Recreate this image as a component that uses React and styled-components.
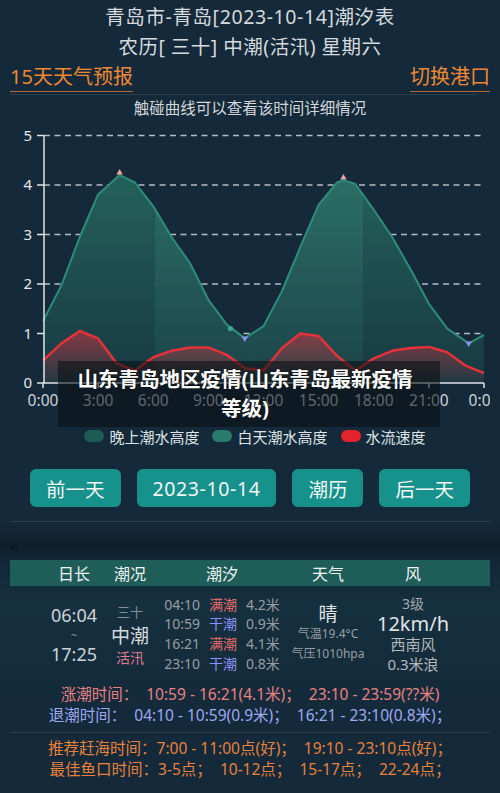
import React from 'react'
import styled, { createGlobalStyle } from 'styled-components'

const GlobalStyle = createGlobalStyle`
  html, body {
    margin: 0;
    padding: 0;
    background: #142a3a;
  }
  body {
    font-family: "Noto Sans", "Noto Sans CJK SC", sans-serif;
  }
`

const Page = styled.div`
  width: 500px;
  min-height: 793px;
  background: #142a3a;
  color: #d6dadd;
  overflow: hidden;
`

const Title = styled.div`
  padding-top: 2px;
  text-align: center;
  font-size: 19.5px;
  line-height: 30px;
  letter-spacing: 0.6px;
  color: #d6dadd;
`

const SubTitle = styled.div`
  text-align: center;
  font-size: 19.5px;
  line-height: 30px;
  letter-spacing: 0.5px;
  color: #d6dadd;
`

const NavRow = styled.div`
  display: flex;
  justify-content: space-between;
  padding: 0 10px;
  margin-top: 1px;
`

const NavLink = styled.span`
  font-size: 20px;
  line-height: 28px;
  color: #ee8834;
  border-bottom: 1.5px solid #b8662a;
`

const Divider = styled.div`
  height: 1px;
  margin: ${p => p.$margin || '0 10px'};
  background: rgba(160, 190, 200, 0.16);
`

const Hint = styled.div`
  text-align: center;
  font-size: 15.5px;
  line-height: 24px;
  color: #d2d6d9;
`

const ChartWrap = styled.div`
  position: relative;
  height: 298px;
`

const ChartSvg = styled.svg`
  display: block;
  overflow: hidden;
  font-family: "Noto Sans", sans-serif;
`

const NewsOverlay = styled.div`
  position: absolute;
  left: 58px;
  top: 241px;
  width: 382px;
  height: 66px;
  box-sizing: border-box;
  padding: 4px 18px 0 10px;
  background: rgba(8, 12, 16, 0.55);
  text-align: center;
  font-size: 20.5px;
  font-weight: 700;
  line-height: 29px;
  color: #ffffff;
  text-shadow: 0 0 2px rgba(0, 0, 0, 0.7);
`

const Legend = styled.div`
  display: flex;
  justify-content: center;
  align-items: center;
  gap: 13px;
  height: 36px;
  padding-left: 10px;
  font-size: 15px;
  color: #dfe3e6;
`

const LegendItem = styled.div`
  display: flex;
  align-items: center;
  gap: 5px;
`

const Swatch = styled.span`
  width: 20px;
  height: 12px;
  border-radius: 6px;
  background: ${p => p.$color};
`

const ButtonRow = styled.div`
  display: flex;
  justify-content: center;
  gap: 16px;
  margin-top: 15px;
`

const DayButton = styled.button`
  height: 38px;
  padding: 0 16px;
  border: none;
  border-radius: 6px;
  background: #17918c;
  color: #f2f6f6;
  font-family: inherit;
  font-size: 19.5px;
  letter-spacing: ${p => (p.$wide ? '0.6px' : '0')};
`

const TableSection = styled.div`
  margin-top: 2px;
  padding-top: 14px;
  background: linear-gradient(
    to bottom,
    #132736 0px,
    #0f202d 22px,
    #12283a 40px,
    #15303f 80px,
    #142b3b 160px,
    #142a3a 200px
  );
`

const Arrow = styled.div`
  padding-left: 10px;
  font-size: 14px;
  line-height: 20px;
  color: #0b0f12;
`

const TableHead = styled.div`
  display: grid;
  grid-template-columns: 56px 56px 128px 84px 86px;
  align-items: center;
  height: 26px;
  margin: 2px 10px 0;
  padding-left: 36px;
  background: #1f5d58;
  font-size: 16px;
  color: #f0f4f4;
  text-align: center;
`

const TableBody = styled.div`
  display: grid;
  grid-template-columns: 56px 56px 128px 84px 86px;
  align-items: center;
  height: 96px;
  margin: 0 10px;
  padding-left: 36px;
  text-align: center;
`

const Cell = styled.div`
  display: flex;
  flex-direction: column;
  align-items: center;
`

const Line = styled.span`
  display: block;
  white-space: nowrap;
  font-size: ${p => p.$size || 14}px;
  line-height: ${p => p.$lh || 20}px;
  color: ${p => p.$color || '#9c9fa2'};
`

const TideRow = styled.div`
  display: flex;
  justify-content: center;
  gap: 9px;
  font-size: 14px;
  line-height: 19.7px;
  color: #9a9da0;
`

const TideKind = styled.span`
  color: ${p => (p.$high ? '#e26a6a' : '#8f90f6')};
`

const InfoBlock = styled.div`
  margin-top: ${p => p.$top || 0}px;
  text-align: center;
  font-size: 15.5px;
  line-height: 21px;
  white-space: pre;
`

const InfoLine = styled.div`
  color: ${p => p.$color};
`

const NextHead = styled.div`
  height: 12px;
  margin: 25px 10px 0;
  background: #1f5d58;
`

// ---- chart data ----
const HOUR = 18.375
const hx = h => 43 + h * HOUR
const vy = v => 263 - v * 49.5

const tide = [
  [0, 1.25], [1, 1.97], [2, 2.95], [3, 3.81], [4.17, 4.2], [5, 4.05],
  [6, 3.57], [7, 2.95], [8, 2.42], [9, 1.68], [10, 1.18], [10.98, 0.9],
  [12, 1.15], [13, 1.85], [14, 2.75], [15, 3.6], [16, 4.05], [16.35, 4.1],
  [17, 4.02], [18, 3.5], [19, 2.95], [20, 2.3], [21, 1.6], [22, 1.1],
  [23.17, 0.8], [24, 0.97]
]

const current = [
  0.45, 0.8, 1.05, 0.9, 0.4, 0.25, 0.52, 0.65, 0.72, 0.72, 0.57, 0.3, 0.25,
  0.7, 1.0, 0.95, 0.55, 0.25, 0.5, 0.65, 0.71, 0.73, 0.62, 0.35, 0.2
].map((v, i) => [i, v])

const linePath = pts =>
  pts.map(([h, v], i) => `${i ? 'L' : 'M'}${hx(h).toFixed(1)} ${vy(v).toFixed(1)}`).join(' ')

const areaPath = pts =>
  `${linePath(pts)} L${hx(24)} ${vy(0)} L${hx(0)} ${vy(0)} Z`

const sunrise = hx(6 + 4 / 60)
const sunset = hx(17 + 25 / 60)

const TideChart = () => (
  <ChartSvg width="490" height="298" viewBox="0 0 490 298">
    <defs>
      <linearGradient id="nightFill" x1="0" y1="50" x2="0" y2="263" gradientUnits="userSpaceOnUse">
        <stop offset="0" stopColor="#24625b" />
        <stop offset="1" stopColor="#173943" />
      </linearGradient>
      <linearGradient id="dayFill" x1="0" y1="50" x2="0" y2="263" gradientUnits="userSpaceOnUse">
        <stop offset="0" stopColor="#2c7067" />
        <stop offset="1" stopColor="#1b4349" />
      </linearGradient>
      <linearGradient id="redFill" x1="0" y1="208" x2="0" y2="263" gradientUnits="userSpaceOnUse">
        <stop offset="0" stopColor="#d8303c" stopOpacity="0.6" />
        <stop offset="1" stopColor="#d8303c" stopOpacity="0.05" />
      </linearGradient>
      <clipPath id="nightClip">
        <rect x="0" y="0" width={sunrise} height="298" />
        <rect x={sunset} y="0" width={500 - sunset} height="298" />
      </clipPath>
      <clipPath id="dayClip">
        <rect x={sunrise} y="0" width={sunset - sunrise} height="298" />
      </clipPath>
    </defs>

    {[1, 2, 3, 4, 5].map(v => (
      <line
        key={v}
        x1="44" x2="484" y1={vy(v)} y2={vy(v)}
        stroke="#b4bcc2" strokeWidth="1.3" strokeDasharray="6 4.5"
      />
    ))}

    <path d={areaPath(tide)} fill="url(#nightFill)" clipPath="url(#nightClip)" />
    <path d={areaPath(tide)} fill="url(#dayFill)" clipPath="url(#dayClip)" />
    <path d={linePath(tide)} fill="none" stroke="#2f8c7b" strokeWidth="2" strokeLinejoin="round" />

    <path d={areaPath(current)} fill="url(#redFill)" />
    <path d={linePath(current)} fill="none" stroke="#e3323a" strokeWidth="2.5" strokeLinejoin="round" />

    {/* high / low markers */}
    <path d={`M${hx(4.17)} ${vy(4.2) - 6} l3.2 5.5 h-6.4 Z`} fill="#f0a3a3" />
    <path d={`M${hx(16.35)} ${vy(4.1) - 6} l3.2 5.5 h-6.4 Z`} fill="#f0a3a3" />
    <path d={`M${hx(10.98) - 3.2} ${vy(0.9) - 2} h6.4 l-3.2 5.5 Z`} fill="#8f90f0" />
    <path d={`M${hx(23.17) - 3.2} ${vy(0.8) - 2} h6.4 l-3.2 5.5 Z`} fill="#8f90f0" />
    <circle cx={hx(10.2)} cy={vy(1.1)} r="2.6" fill="#3ea593" />

    <line x1="44" x2="44" y1={vy(5)} y2={vy(0)} stroke="#dfe3e6" strokeWidth="1.5" />
    <line x1="43" x2="484" y1={vy(0)} y2={vy(0)} stroke="#dfe3e6" strokeWidth="1.5" />

    {[0, 1, 2, 3, 4, 5].map(v => (
      <g key={v}>
        <line x1="37" x2="44" y1={vy(v)} y2={vy(v)} stroke="#dfe3e6" strokeWidth="1.5" />
        <text x="32" y={vy(v) + 5} textAnchor="end" fontSize="15" fill="#e4e7ea">{v}</text>
      </g>
    ))}

    {[0, 3, 6, 9, 12, 15, 18, 21, 24].map(h => (
      <g key={h}>
        <line x1={hx(h)} x2={hx(h)} y1={vy(0)} y2={vy(0) + 5} stroke="#dfe3e6" strokeWidth="1.5" />
        <text x={hx(h)} y="286" textAnchor="middle" fontSize="15.5" fill="#cfd3d6">
          {`${h % 24}:00`}
        </text>
      </g>
    ))}
  </ChartSvg>
)

const tideRows = [
  { time: '04:10', kind: '满潮', high: true, height: '4.2米' },
  { time: '10:59', kind: '干潮', high: false, height: '0.9米' },
  { time: '16:21', kind: '满潮', high: true, height: '4.1米' },
  { time: '23:10', kind: '干潮', high: false, height: '0.8米' }
]

const App = () => (
  <Page>
    <GlobalStyle />
    <Title>青岛市-青岛[2023-10-14]潮汐表</Title>
    <SubTitle>农历[ 三十] 中潮(活汛) 星期六</SubTitle>
    <NavRow>
      <NavLink>15天天气预报</NavLink>
      <NavLink>切换港口</NavLink>
    </NavRow>
    <Divider $margin="2px 22px 1px 10px" />
    <Hint>触碰曲线可以查看该时间详细情况</Hint>

    <ChartWrap>
      <TideChart />
      <NewsOverlay>
        山东青岛地区疫情(山东青岛最新疫情
        <br />
        等级)
      </NewsOverlay>
    </ChartWrap>

    <Legend>
      <LegendItem>
        <Swatch $color="#1f5b55" />
        晚上潮水高度
      </LegendItem>
      <LegendItem>
        <Swatch $color="#2b7b6d" />
        白天潮水高度
      </LegendItem>
      <LegendItem>
        <Swatch $color="#e3242a" />
        水流速度
      </LegendItem>
    </Legend>

    <ButtonRow>
      <DayButton>前一天</DayButton>
      <DayButton $wide>2023-10-14</DayButton>
      <DayButton>潮历</DayButton>
      <DayButton>后一天</DayButton>
    </ButtonRow>
    <Divider $margin="14px 10px 0" />

    <TableSection>
      <Arrow>&lt;</Arrow>
      <TableHead>
        <span>日长</span>
        <span>潮况</span>
        <span>潮汐</span>
        <span>天气</span>
        <span>风</span>
      </TableHead>
      <TableBody>
        <Cell>
          <Line $size={18} $color="#d0d3d6">06:04</Line>
          <Line $size={11} $lh={19} $color="#8d9194">~</Line>
          <Line $size={18} $color="#d0d3d6">17:25</Line>
        </Cell>
        <Cell>
          <Line $size={13} $color="#8a8e91">三十</Line>
          <Line $size={19} $lh={28} $color="#d8dbde">中潮</Line>
          <Line $size={14} $lh={16} $color="#e07b92">活汛</Line>
        </Cell>
        <Cell>
          {tideRows.map(r => (
            <TideRow key={r.time}>
              <span>{r.time}</span>
              <TideKind $high={r.high}>{r.kind}</TideKind>
              <span>{r.height}</span>
            </TideRow>
          ))}
        </Cell>
        <Cell>
          <Line $size={19} $color="#e0e3e6">晴</Line>
          <Line $size={12} $color="#9a9ea1">气温19.4°C</Line>
          <Line $size={12} $color="#9a9ea1">气压1010hpa</Line>
        </Cell>
        <Cell>
          <Line $size={14} $color="#a4a8ab">3级</Line>
          <Line $size={20} $color="#e0e3e6">12km/h</Line>
          <Line $size={15} $color="#b4b8bb">西南风</Line>
          <Line $size={15} $color="#b4b8bb">0.3米浪</Line>
        </Cell>
      </TableBody>

      <InfoBlock $top={2}>
        <InfoLine $color="#e88282">涨潮时间：  10:59 - 16:21(4.1米)；  23:10 - 23:59(??米)</InfoLine>
        <InfoLine $color="#9ea8f2">退潮时间：  04:10 - 10:59(0.9米)；  16:21 - 23:10(0.8米)；</InfoLine>
      </InfoBlock>
      <Divider $margin="6px 10px 5px" />
      <InfoBlock>
        <InfoLine $color="#e9813a">推荐赶海时间：7:00 - 11:00点(好)；  19:10 - 23:10点(好)；</InfoLine>
        <InfoLine $color="#e9813a">最佳鱼口时间：3-5点；  10-12点；  15-17点；  22-24点；</InfoLine>
      </InfoBlock>
      <NextHead />
    </TableSection>
  </Page>
)

export default App
